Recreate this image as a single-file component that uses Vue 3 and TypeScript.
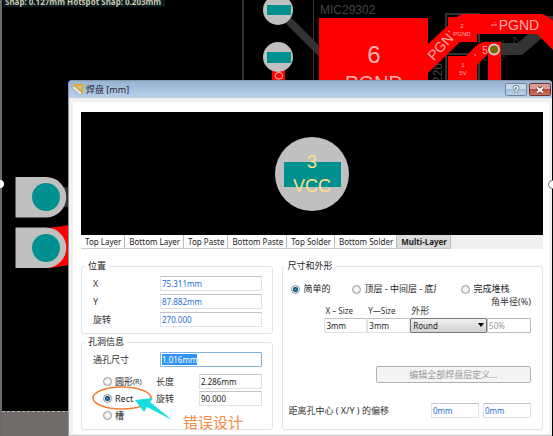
<script setup lang="ts">
import { ref } from 'vue'

const tabs: string[] = [
  'Top Layer',
  'Bottom Layer',
  'Top Paste',
  'Bottom Paste',
  'Top Solder',
  'Bottom Solder',
  'Multi-Layer',
]
const activeTab = ref('Multi-Layer')

const position = ref([
  { id: 'pos-x', label: 'X', value: '75.311mm' },
  { id: 'pos-y', label: 'Y', value: '87.882mm' },
  { id: 'pos-rotation', label: '旋转', value: '270.000' },
])

const holeSize = ref('1.016mm')
const holeShape = ref('rect')
const holeLength = ref('2.286mm')
const holeRotation = ref('90.000')

const stackModes = [
  { id: 'simple', label: '简单的' },
  { id: 'tmb', label: '顶层 - 中间层 - 底层' },
  { id: 'full', label: '完成堆栈' },
]
const stackMode = ref('simple')
const sizeX = ref('3mm')
const sizeY = ref('3mm')
const padShape = ref('Round')
const cornerRadius = ref('50%')
const offsetX = ref('0mm')
const offsetY = ref('0mm')
</script>

<template>
  <main class="workspace">
    <svg class="board" viewBox="0 0 553 436" preserveAspectRatio="xMinYMin slice" aria-hidden="true">
      <rect width="553" height="436" fill="#000" />
      <rect width="2" height="436" fill="#6a6a6a" />
      <rect x="2" y="411" width="68" height="25" fill="#716c6a" />
      <path d="M2 411.500H70" stroke="#b5b5b5" stroke-dasharray="3 2" />
      <rect x="3" y="0" width="162" height="7" fill="#0b1b22" />
      <text x="5" y="5" class="snap">Snap: 0.127mm Hotspot Snap: 0.203mm</text>

      <g fill="none" stroke="#333">
        <path d="M243 0V80" stroke-width="2" />
        <path d="M313.500 0V80" />
        <path d="M286 18L322 54" stroke-width="8" />
        <path d="M446 80V14H479V43M446 54H479V80" stroke-width="2" />
        <path d="M484 42V60H504V42Z" stroke-dasharray="5 3" />
        <path d="M514 43V37L519 42" />
        <path d="M500 49H520L543 29" stroke-width="12" />
      </g>
      <rect x="536" y="16" width="17" height="10" fill="#333" />
      <rect x="272" y="68" width="13" height="12" fill="red" />
      <text transform="translate(283 80) rotate(-90)" class="net" font-size="11">O</text>
      <g fill="#c0c0c0">
        <circle cx="278" cy="10" r="15" />
        <circle cx="278" cy="57" r="15" />
      </g>
      <path d="M267 5h24v10h-24zM267 52h24v11h-24z" fill="#009090" />

      <text x="320" y="14" class="silk" font-size="12">MIC29302</text>
      <text transform="translate(442 83) rotate(-90)" class="silk" font-size="12">226</text>
      <g fill="red">
        <path d="M319 18H428V80H319Z" />
        <path d="M427 45L456 18Q460 14 465 14H540Q546 14 553 21V50L537 34H470L460 42L427 74Z" />
        <path d="M448 17H477V42H448ZM448 56H466L476 46Q480 42 486 42H501V80H488V54L477 65V80H448Z" />
      </g>
      <g class="net" text-anchor="middle">
        <text x="374" y="63" font-size="24">6</text>
        <text x="374" y="90" font-size="20">PGND</text>
        <text x="519" y="30" font-size="14">PGND</text>
        <text x="462" y="28" font-size="6">2</text>
        <text x="462" y="36" font-size="6">PGND</text>
        <text x="463" y="67" font-size="6">1</text>
        <text x="463" y="75" font-size="6">5V</text>
        <text x="485" y="54" font-size="10">5</text>
        <text transform="translate(444 50) rotate(-48)" font-size="14">PGN</text>
      </g>
      <path d="M491 25h6M495 22v1M450 32l-2-1M474 54l2 2" stroke="#f99" fill="none" />
      <circle cx="494" cy="49.500" r="6" fill="#ccc" />
      <circle cx="494" cy="49.500" r="4" fill="#7c6900" />

      <rect x="64" y="187" width="5" height="20" fill="#333" />
      <path d="M48 228L70 225V265L50 268Z" fill="red" />
      <g fill="#c0c0c0">
        <path d="M15.500 177H46A20 20 0 0 1 46 217.500H15.500Z" />
        <path d="M15.500 227.500H46A20 20 0 0 1 46 268H15.500Z" />
      </g>
      <g fill="#009090">
        <circle cx="46" cy="197" r="14" />
        <circle cx="46" cy="248" r="14" />
      </g>
      <circle cx="0" cy="184" r="4" fill="#fff" />
    </svg>

    <section class="dialog" aria-labelledby="dialog-title">
      <header class="titlebar">
        <svg class="app-icon" viewBox="0 0 12 12" aria-hidden="true">
          <path d="M1 0H11V11Z" fill="#e7ab1c" />
          <path d="M5.500 2H9V6Z" fill="#b9cfe0" />
          <path d="M0 4L2 2L10 9L8 11Z" fill="#eceae4" stroke="#99a0a5" stroke-width=".6" />
          <path d="M2 6l1-1M4 8l1-1M6 9.500l1-1" stroke="#8b8b8b" stroke-width=".6" />
        </svg>
        <h1 id="dialog-title">焊盘 [mm]</h1>
        <button class="caption" type="button" aria-label="Help">
          <svg viewBox="0 0 10 10">
            <path d="M3 3.500Q3 1.500 5 1.500T7 3.500Q7 4.700 5 5.300V6.500M5 7.500V9" fill="none" stroke="#54687f" stroke-width="2.800" />
            <path d="M3 3.500Q3 1.500 5 1.500T7 3.500Q7 4.700 5 5.300V6.500M5 7.500V9" fill="none" stroke="#fff" stroke-width="1.400" />
          </svg>
        </button>
        <button class="caption close" type="button" aria-label="Close">
          <svg viewBox="0 0 10 10">
            <path d="M2 2.500L8 7.500M8 2.500L2 7.500" stroke="#6b3a38" stroke-width="3.600" />
            <path d="M2 2.500L8 7.500M8 2.500L2 7.500" stroke="#fff" stroke-width="2" />
          </svg>
        </button>
      </header>

      <div class="content">
        <div class="preview">
          <svg viewBox="0 0 76 76" role="img" aria-label="3 VCC">
            <circle cx="38" cy="38" r="37" fill="#c0c0c0" />
            <rect x="10" y="26" width="57" height="25" fill="#009090" />
            <g class="designator" text-anchor="middle">
              <text x="38" y="32">3</text>
              <text x="38" y="56">VCC</text>
            </g>
          </svg>
        </div>

        <nav class="tabs" role="tablist">
          <button
            v-for="tab in tabs"
            :key="tab"
            type="button"
            role="tab"
            :aria-selected="tab === activeTab"
            :class="{ active: tab === activeTab }"
            @click="activeTab = tab"
          >
            {{ tab }}
          </button>
        </nav>

        <div class="columns">
          <div class="left">
            <fieldset class="position">
              <legend>位置</legend>
              <div v-for="row in position" :key="row.id" class="row">
                <label :for="row.id">{{ row.label }}</label>
                <input :id="row.id" v-model="row.value" class="linked" type="text" />
              </div>
            </fieldset>

            <fieldset class="hole">
              <legend>孔洞信息</legend>
              <div class="row hole-size">
                <label for="hole-size">通孔尺寸</label>
                <span class="field">
                  <input id="hole-size" v-model="holeSize" type="text" />
                  <span class="selection" aria-hidden="true">{{ holeSize }}</span>
                </span>
              </div>
              <div class="hole-grid">
                <label class="radio"><input v-model="holeShape" type="radio" value="round" />圆形<small>(R)</small></label>
                <label for="hole-length">长度</label>
                <input id="hole-length" v-model="holeLength" type="text" />
                <label class="radio"><input v-model="holeShape" type="radio" value="rect" />Rect</label>
                <label for="hole-rotation">旋转</label>
                <input id="hole-rotation" v-model="holeRotation" type="text" />
                <label class="radio"><input v-model="holeShape" type="radio" value="slot" />槽</label>
              </div>
              <svg class="callout" viewBox="0 0 160 52" aria-hidden="true">
                <ellipse cx="32" cy="16" rx="29" ry="11" fill="none" stroke="#f08238" stroke-width="1.600" />
                <path d="M45 18L63 16L60 20L82 38L57 25L54 30Z" fill="#16dede" />
                <text x="93" y="46">错误设计</text>
              </svg>
            </fieldset>
          </div>

          <fieldset class="shape">
            <legend>尺寸和外形</legend>
            <div class="modes">
              <label v-for="mode in stackModes" :key="mode.id" class="radio" :class="mode.id">
                <input v-model="stackMode" type="radio" :value="mode.id" /><span>{{ mode.label }}</span>
              </label>
            </div>
            <div class="sizes">
              <div class="cell">
                <label for="size-x">X – Size</label>
                <input id="size-x" v-model="sizeX" type="text" />
              </div>
              <div class="cell">
                <label for="size-y">Y—Size</label>
                <input id="size-y" v-model="sizeY" type="text" />
              </div>
              <div class="cell wide">
                <label for="pad-shape">外形</label>
                <select id="pad-shape" v-model="padShape">
                  <option>Round</option>
                  <option>Rectangular</option>
                  <option>Octagonal</option>
                </select>
                <svg class="arrow" viewBox="0 0 6 4" aria-hidden="true"><path d="M0 0H6L3 4Z" /></svg>
              </div>
              <div class="cell corner">
                <label for="corner">角半径(%)</label>
                <input id="corner" v-model="cornerRadius" type="text" disabled />
              </div>
            </div>
            <button class="edit" type="button" disabled>编辑全部焊盘层定义...</button>
            <div class="offset">
              <label for="offset-x">距离孔中心 ( X/Y ) 的偏移</label>
              <input id="offset-x" v-model="offsetX" class="linked" type="text" />
              <input v-model="offsetY" class="linked" type="text" aria-label="Y" />
            </div>
          </fieldset>
        </div>
      </div>
      <span class="handle" aria-hidden="true"></span>
    </section>
  </main>
</template>

<style>
body {
  background: #000;
  overflow: hidden;
}
</style>

<style scoped>
* {
  box-sizing: border-box;
}

.workspace {
  position: relative;
  min-height: 100vh;
  padding: 80px 1px 0 68px;
  overflow: hidden;
  color: #333;
  font: 9px/12px 'Noto Sans', 'Noto Sans CJK SC', sans-serif;
}

.board {
  position: absolute;
  inset: 0;
  width: 100%;
  height: 100%;
}

.snap {
  fill: #c4c9a8;
  font: bold 8px 'Noto Sans', sans-serif;
}

.silk {
  fill: #444;
  font-family: 'Liberation Sans', sans-serif;
}

.net {
  fill: #ffb0b0;
  font-family: 'Liberation Sans', sans-serif;
}

.designator {
  fill: #ffe08a;
  font: 18px 'Liberation Sans', sans-serif;
}

.dialog {
  position: relative;
  padding: 0 3px 1px 4px;
  background: #f0f0f0;
  border: 1px solid #8599ad;
  border-width: 1px 0 1px 1px;
  border-bottom-color: #ccc;
  border-radius: 4px 4px 0 0;
}

.titlebar {
  display: flex;
  align-items: center;
  gap: 2px;
  height: 17px;
  margin: 0 -3px 4px -4px;
  padding: 0 1px 0 3px;
  background: linear-gradient(#98b3d0, #b9d0e9);
  border-radius: 3px 3px 0 0;
}

.app-icon {
  width: 12px;
  height: 12px;
}

h1 {
  flex: 1;
  margin: 0;
  color: #223;
  font-size: 9px;
  font-weight: 400;
}

.caption {
  display: grid;
  place-items: center;
  width: 22px;
  height: 13px;
  padding: 0;
  background: linear-gradient(#c8d8e9 45%, #a8bfd8 50%, #bdd2e8);
  border: 1px solid #6f86a1;
  border-radius: 2px;
}

.caption svg {
  width: 10px;
  height: 10px;
}

.caption.close {
  background: linear-gradient(#dc9e94 45%, #b8493b 50%, #cf7565);
  border-color: #6d3433;
}

.content {
  padding: 10px 6px 4px 8px;
  background: #fff;
}

.preview {
  display: grid;
  place-items: center;
  height: 123px;
  background: #000;
}

.preview svg {
  width: 76px;
  height: 76px;
}

.tabs {
  display: flex;
  height: 14px;
  margin-bottom: 11px;
  background: #f0f0f0;
}

.tabs button {
  padding: 0 3px 0 4px;
  background: #fff;
  border: 0;
  border-right: 1px solid #bbb;
  border-bottom: 1px solid #ccc;
  color: #222;
  font: 8px/12px 'Noto Sans', sans-serif;
  white-space: nowrap;
}

.tabs .active {
  background: #dcdcdc;
  font-weight: 700;
}

.columns {
  display: grid;
  grid-template-columns: 192fr 260fr;
  gap: 9px;
}

.left {
  display: flex;
  flex-direction: column;
  gap: 2px;
}

fieldset {
  position: relative;
  min-width: 0;
  margin: 0;
  padding: 4px 10px 6px 11px;
  border: 1px solid #dce6ee;
  border-radius: 3px;
}

legend {
  margin-left: -8px;
  padding: 0 3px;
  color: #222;
}

input,
select {
  min-width: 0;
  margin: 0;
  color: #222;
  font: 8px/12px 'Noto Sans', sans-serif;
}

input[type='text'] {
  width: 100%;
  height: 15px;
  padding: 0 1px;
  background: #fff;
  border: 1px solid #dfe3e8;
  border-top-color: #c0c3c8;
  border-radius: 1px;
}

input.linked {
  color: #1f6fd0;
}

.row {
  display: grid;
  grid-template-columns: 67px 1fr;
  align-items: center;
}

.position .row + .row {
  margin-top: 3px;
}

.hole-size {
  margin-bottom: 7px;
}

.field {
  position: relative;
  display: flex;
}

.field input[type='text'] {
  border-color: #7fb2dc;
}

.selection {
  position: absolute;
  top: 2px;
  left: 2px;
  background: #3092f5;
  color: #fff;
  font-size: 8px;
  line-height: 11px;
}

.hole-grid {
  display: grid;
  grid-template-columns: 53px 43px 1fr;
  grid-auto-rows: 15px;
  align-items: center;
  row-gap: 2px;
  padding-left: 10px;
}

.radio {
  display: flex;
  align-items: center;
  color: #222;
  white-space: nowrap;
}

.radio small {
  font-size: 7px;
}

.radio input {
  flex: none;
  appearance: none;
  width: 9px;
  height: 9px;
  margin-right: 3px;
  background: radial-gradient(#fff, #ddd);
  border: 1px solid #999;
  border-radius: 50%;
}

.radio input:checked {
  background: radial-gradient(#3fa7d6 0, #12405f 2px, #e4eef4 3px);
  border-color: #8a97a2;
}

.callout {
  position: absolute;
  top: 34px;
  left: 8px;
  width: 160px;
  height: 52px;
  pointer-events: none;
}

.callout text {
  fill: #f58a42;
  font: 15px 'Noto Sans CJK SC', sans-serif;
}

.shape {
  display: flex;
  flex-direction: column;
  padding: 11px 11px 6px 5px;
}

.shape legend {
  margin-left: -4px;
}

.modes {
  display: flex;
  padding-left: 3px;
}

.modes .simple {
  flex: 0 0 61px;
}

.modes .tmb {
  flex: 0 0 84px;
  min-width: 0;
  margin-right: 25px;
}

.modes .tmb span {
  overflow: hidden;
}

.sizes {
  display: flex;
  align-items: flex-end;
  padding-left: 36px;
}

.cell {
  position: relative;
  flex: 43;
  display: flex;
  flex-direction: column;
  min-width: 0;
  font-size: 9px;
  line-height: 14px;
}

.cell label {
  padding-left: 1px;
  white-space: nowrap;
}

.cell:not(.wide):not(.corner) label {
  font-size: 8px;
}

.wide {
  flex: 77;
}

.corner {
  flex: 44;
}

.corner label {
  align-self: flex-end;
  margin-bottom: 9px;
}

select {
  appearance: none;
  width: 100%;
  height: 15px;
  padding: 0 2px;
  background: linear-gradient(#f0f0f0, #d2d2d2);
  border: 1px solid #777;
  border-radius: 1px;
}

.arrow {
  position: absolute;
  right: 3px;
  bottom: 6px;
  width: 6px;
  height: 4px;
  pointer-events: none;
}

.sizes input:disabled {
  border-color: #bbb;
  color: #999;
}

.edit {
  align-self: flex-end;
  width: 64%;
  height: 17px;
  margin: 33px 0 20px;
  padding: 0;
  background: #f4f4f4;
  border: 1px solid #adb2b5;
  border-radius: 2px;
  color: #999;
  font: 9px/12px 'Noto Sans', 'Noto Sans CJK SC', sans-serif;
}

.offset {
  display: grid;
  grid-template-columns: 1fr 48px 48px;
  align-items: center;
  gap: 4px;
}

.offset label {
  white-space: nowrap;
}

.handle {
  position: absolute;
  top: 99px;
  right: -5px;
  width: 9px;
  height: 9px;
  background: #fff;
  border: 1px solid #777;
  border-radius: 50%;
}
</style>
